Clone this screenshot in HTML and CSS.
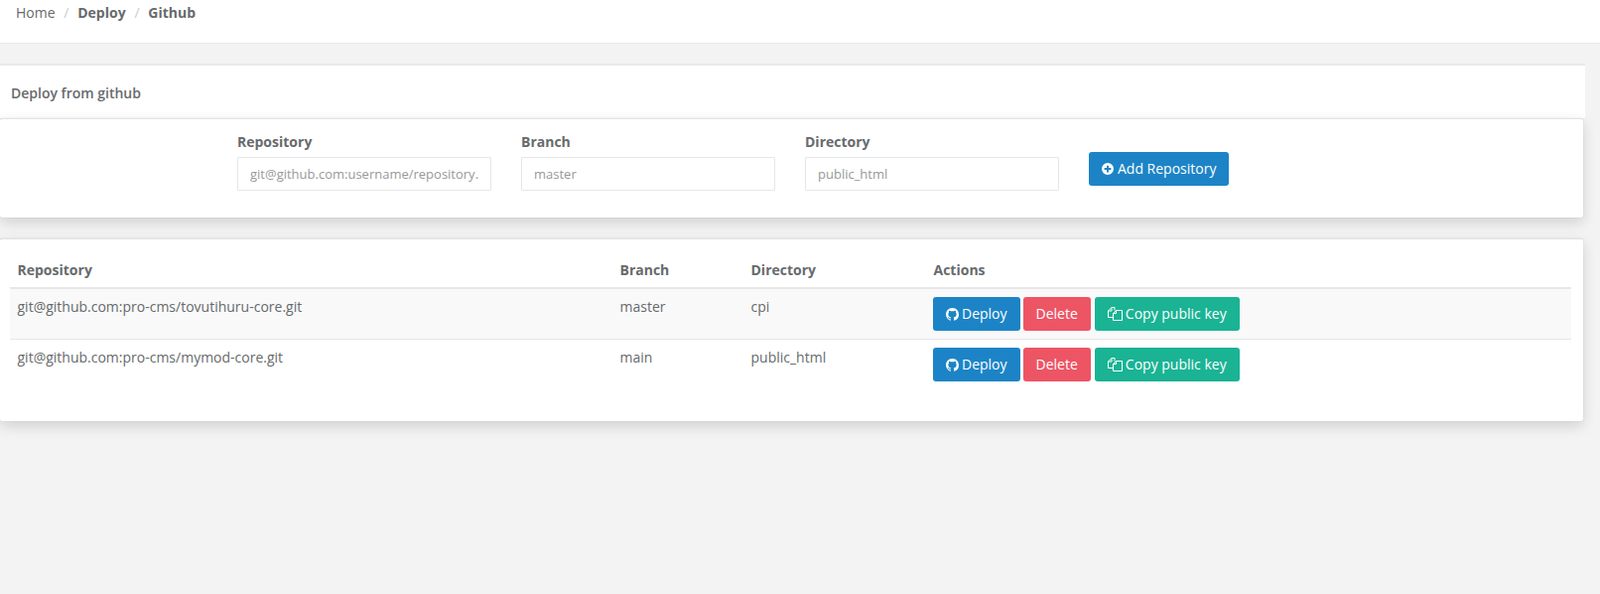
FILE: index.html
```html
<!DOCTYPE html>
<html lang="en">
<head>
<meta charset="utf-8">
<title>Deploy from github</title>
<link rel="stylesheet" href="styles.css">
</head>
<body>
<nav class="topbar">
  <ol class="crumbs">
    <li>Home</li>
    <li class="sep">/</li>
    <li class="strong">Deploy</li>
    <li class="sep">/</li>
    <li class="strong">Github</li>
  </ol>
</nav>
<main class="wrapper">
  <section class="ibox first">
    <header class="ibox-title"><h5>Deploy from github</h5></header>
    <form class="ibox-content add-form">
      <div class="field">
        <label for="repo">Repository</label>
        <input id="repo" type="text" placeholder="git@github.com:username/repository.git">
      </div>
      <div class="field">
        <label for="branch">Branch</label>
        <input id="branch" type="text" placeholder="master">
      </div>
      <div class="field">
        <label for="dir">Directory</label>
        <input id="dir" type="text" placeholder="public_html">
      </div>
      <button type="button" class="btn blue add">
        <svg class="icon plus" viewBox="0 0 16 16"><path fill-rule="evenodd" d="M8 0a8 8 0 1 0 0 16A8 8 0 0 0 8 0zM6.700 3.500h2.600v3.200h3.200v2.600H9.300v3.200H6.700V9.300H3.500V6.700h3.200z"/></svg>
        Add Repository
      </button>
    </form>
  </section>
  <section class="ibox-content list">
    <table class="repos">
      <thead>
        <tr><th class="c1">Repository</th><th class="c2">Branch</th><th class="c3">Directory</th><th class="c4">Actions</th></tr>
      </thead>
      <tbody>
        <tr class="odd">
          <td>git@github.com:pro-cms/tovutihuru-core.git</td><td>master</td><td>cpi</td>
          <td class="c4">
            <div class="actions">
              <button type="button" class="btn blue deploy"><svg class="icon" viewBox="0 0 16 16"><path d="M8 0C3.580 0 0 3.580 0 8c0 3.540 2.290 6.530 5.470 7.590.4.070.55-.17.55-.38 0-.19-.01-.82-.01-1.490-2.010.37-2.530-.49-2.690-.94-.09-.23-.48-.94-.82-1.130-.28-.15-.68-.52-.01-.53.63-.01 1.080.58 1.230.82.72 1.210 1.870.87 2.330.66.07-.52.28-.87.51-1.070-1.780-.2-3.640-.89-3.640-3.950 0-.87.31-1.590.82-2.150-.08-.2-.36-1.020.08-2.120 0 0 .67-.21 2.200.82.64-.18 1.320-.27 2-.27s1.360.09 2 .27c1.530-1.040 2.200-.82 2.200-.82.44 1.100.16 1.920.08 2.120.51.56.82 1.270.82 2.150 0 3.070-1.870 3.750-3.650 3.950.29.25.54.73.54 1.480 0 1.070-.01 1.930-.01 2.200 0 .21.15.46.55.38A8.010 8.010 0 0 0 16 8c0-4.420-3.580-8-8-8z"/></svg> Deploy</button>
              <button type="button" class="btn red">Delete</button>
              <button type="button" class="btn green"><svg class="icon files" viewBox="0 0 15 14"><path d="M7 3.500V.5H4L.5 4v6.500H5.500M4 .5V4H.5M8.500 3.500 5.500 6.500v7h9v-10zM8.500 3.500v3h-3"/></svg> Copy public key</button>
            </div>
          </td>
        </tr>
        <tr>
          <td>git@github.com:pro-cms/mymod-core.git</td><td>main</td><td>public_html</td>
          <td class="c4">
            <div class="actions">
              <button type="button" class="btn blue deploy"><svg class="icon" viewBox="0 0 16 16"><path d="M8 0C3.580 0 0 3.580 0 8c0 3.540 2.290 6.530 5.470 7.590.4.070.55-.17.55-.38 0-.19-.01-.82-.01-1.490-2.010.37-2.530-.49-2.690-.94-.09-.23-.48-.94-.82-1.130-.28-.15-.68-.52-.01-.53.63-.01 1.080.58 1.230.82.72 1.210 1.870.87 2.330.66.07-.52.28-.87.51-1.070-1.780-.2-3.640-.89-3.640-3.950 0-.87.31-1.590.82-2.150-.08-.2-.36-1.020.08-2.120 0 0 .67-.21 2.200.82.64-.18 1.320-.27 2-.27s1.360.09 2 .27c1.530-1.040 2.200-.82 2.200-.82.44 1.100.16 1.920.08 2.120.51.56.82 1.270.82 2.150 0 3.070-1.870 3.750-3.650 3.950.29.25.54.73.54 1.480 0 1.070-.01 1.930-.01 2.200 0 .21.15.46.55.38A8.010 8.010 0 0 0 16 8c0-4.420-3.580-8-8-8z"/></svg> Deploy</button>
              <button type="button" class="btn red">Delete</button>
              <button type="button" class="btn green"><svg class="icon files" viewBox="0 0 15 14"><path d="M7 3.500V.5H4L.5 4v6.500H5.500M4 .5V4H.5M8.500 3.500 5.500 6.500v7h9v-10zM8.500 3.500v3h-3"/></svg> Copy public key</button>
            </div>
          </td>
        </tr>
      </tbody>
    </table>
  </section>
</main>
</body>
</html>
```
FILE: styles.css
```css
* { box-sizing: border-box; }
html, body { margin: 0; height: 100%; }
body {
  background: #f3f3f4;
  color: #676a6c;
  font-family: "Open Sans", "Liberation Sans", sans-serif;
  font-size: 14px;
  line-height: 20px;
  overflow: hidden;
}
.topbar {
  background: #fff;
  height: 44px;
  border-bottom: 1px solid #e7eaec;
  padding: 3px 0 0 16px;
}
.crumbs {
  display: flex;
  margin: 0;
  padding: 0;
  list-style: none;
}
.crumbs .sep { color: #ccc; padding: 0 8.750px; }
.crumbs .strong { font-weight: 700; }
.wrapper {
  width: 1597px;
  padding-top: 20px;
}
.ibox { margin-bottom: 21px; }
.ibox-title {
  background: #fff;
  border-top: 2px solid #e7eaec;
  height: 55px;
  padding: 18px 0 0 11px;
}
.ibox-title h5 { margin: 0; font-size: 14px; font-weight: 600; line-height: 20px; }
.ibox-content {
  background: #fff;
  border-top: 1px solid #e2e2e2;
  border-radius: 2px;
  margin-right: 2px;
  box-shadow: 0 5px 14px rgba(0, 0, 0, .14), 0 0 1px rgba(0, 0, 0, .2);
}
.add-form {
  display: flex;
  align-items: flex-start;
  gap: 30px;
  height: 100px;
  padding: 13px 0 0 239px;
}
.field { width: 256px; }
.field label { display: block; font-weight: 700; margin-bottom: 5px; line-height: 20px; }
.field input {
  display: block;
  width: 100%;
  height: 34px;
  padding: 6px 12px;
  border: 1px solid #e5e6e7;
  border-radius: 1px;
  color: inherit;
  font: inherit;
  font-size: 13px;
  outline: none;
}
.field input::placeholder { color: #999; opacity: 1; }
.btn {
  display: inline-flex;
  align-items: center;
  justify-content: center;
  gap: 4px;
  height: 34px;
  padding: 0 13px;
  border: 0;
  border-radius: 3px;
  color: #fff;
  font: inherit;
  white-space: nowrap;
}
.btn.blue { background: #1c84c6; }
.btn.deploy { gap: 3px; }
.btn.red { background: #ed5565; }
.btn.green { background: #1ab394; gap: 3px; margin-left: 1px; }
.add { margin-top: 20px; }
.icon { width: 13px; height: 13px; fill: currentColor; flex: none; }
.icon.plus { width: 12px; height: 12px; }
.icon.files { width: 15px; height: 14px; fill: none; stroke: currentColor; stroke-width: 1; }
.list { height: 184px; padding: 13px 12px 0 10px; }
.repos { width: 100%; border-collapse: collapse; table-layout: fixed; }
.repos th { text-align: left; padding: 8px 8px 7px 7.500px; border-bottom: 2px solid #e7e7e7; font-weight: 700; }
.repos td { vertical-align: top; padding: 8px 8px 8px 7.500px; border-bottom: 1px solid #e7e7e7; height: 50px; }
.repos th.c4 { padding-left: 8.500px; }
.repos td.c4 { padding-left: 8px; }
.repos tr:last-child td { border-bottom: 0; }
.repos .odd td { background: #f9f9f9; }
.c1 { width: 607px; }
.c2 { width: 132px; }
.c3 { width: 183px; }
.actions { display: flex; gap: 3px; }
```
